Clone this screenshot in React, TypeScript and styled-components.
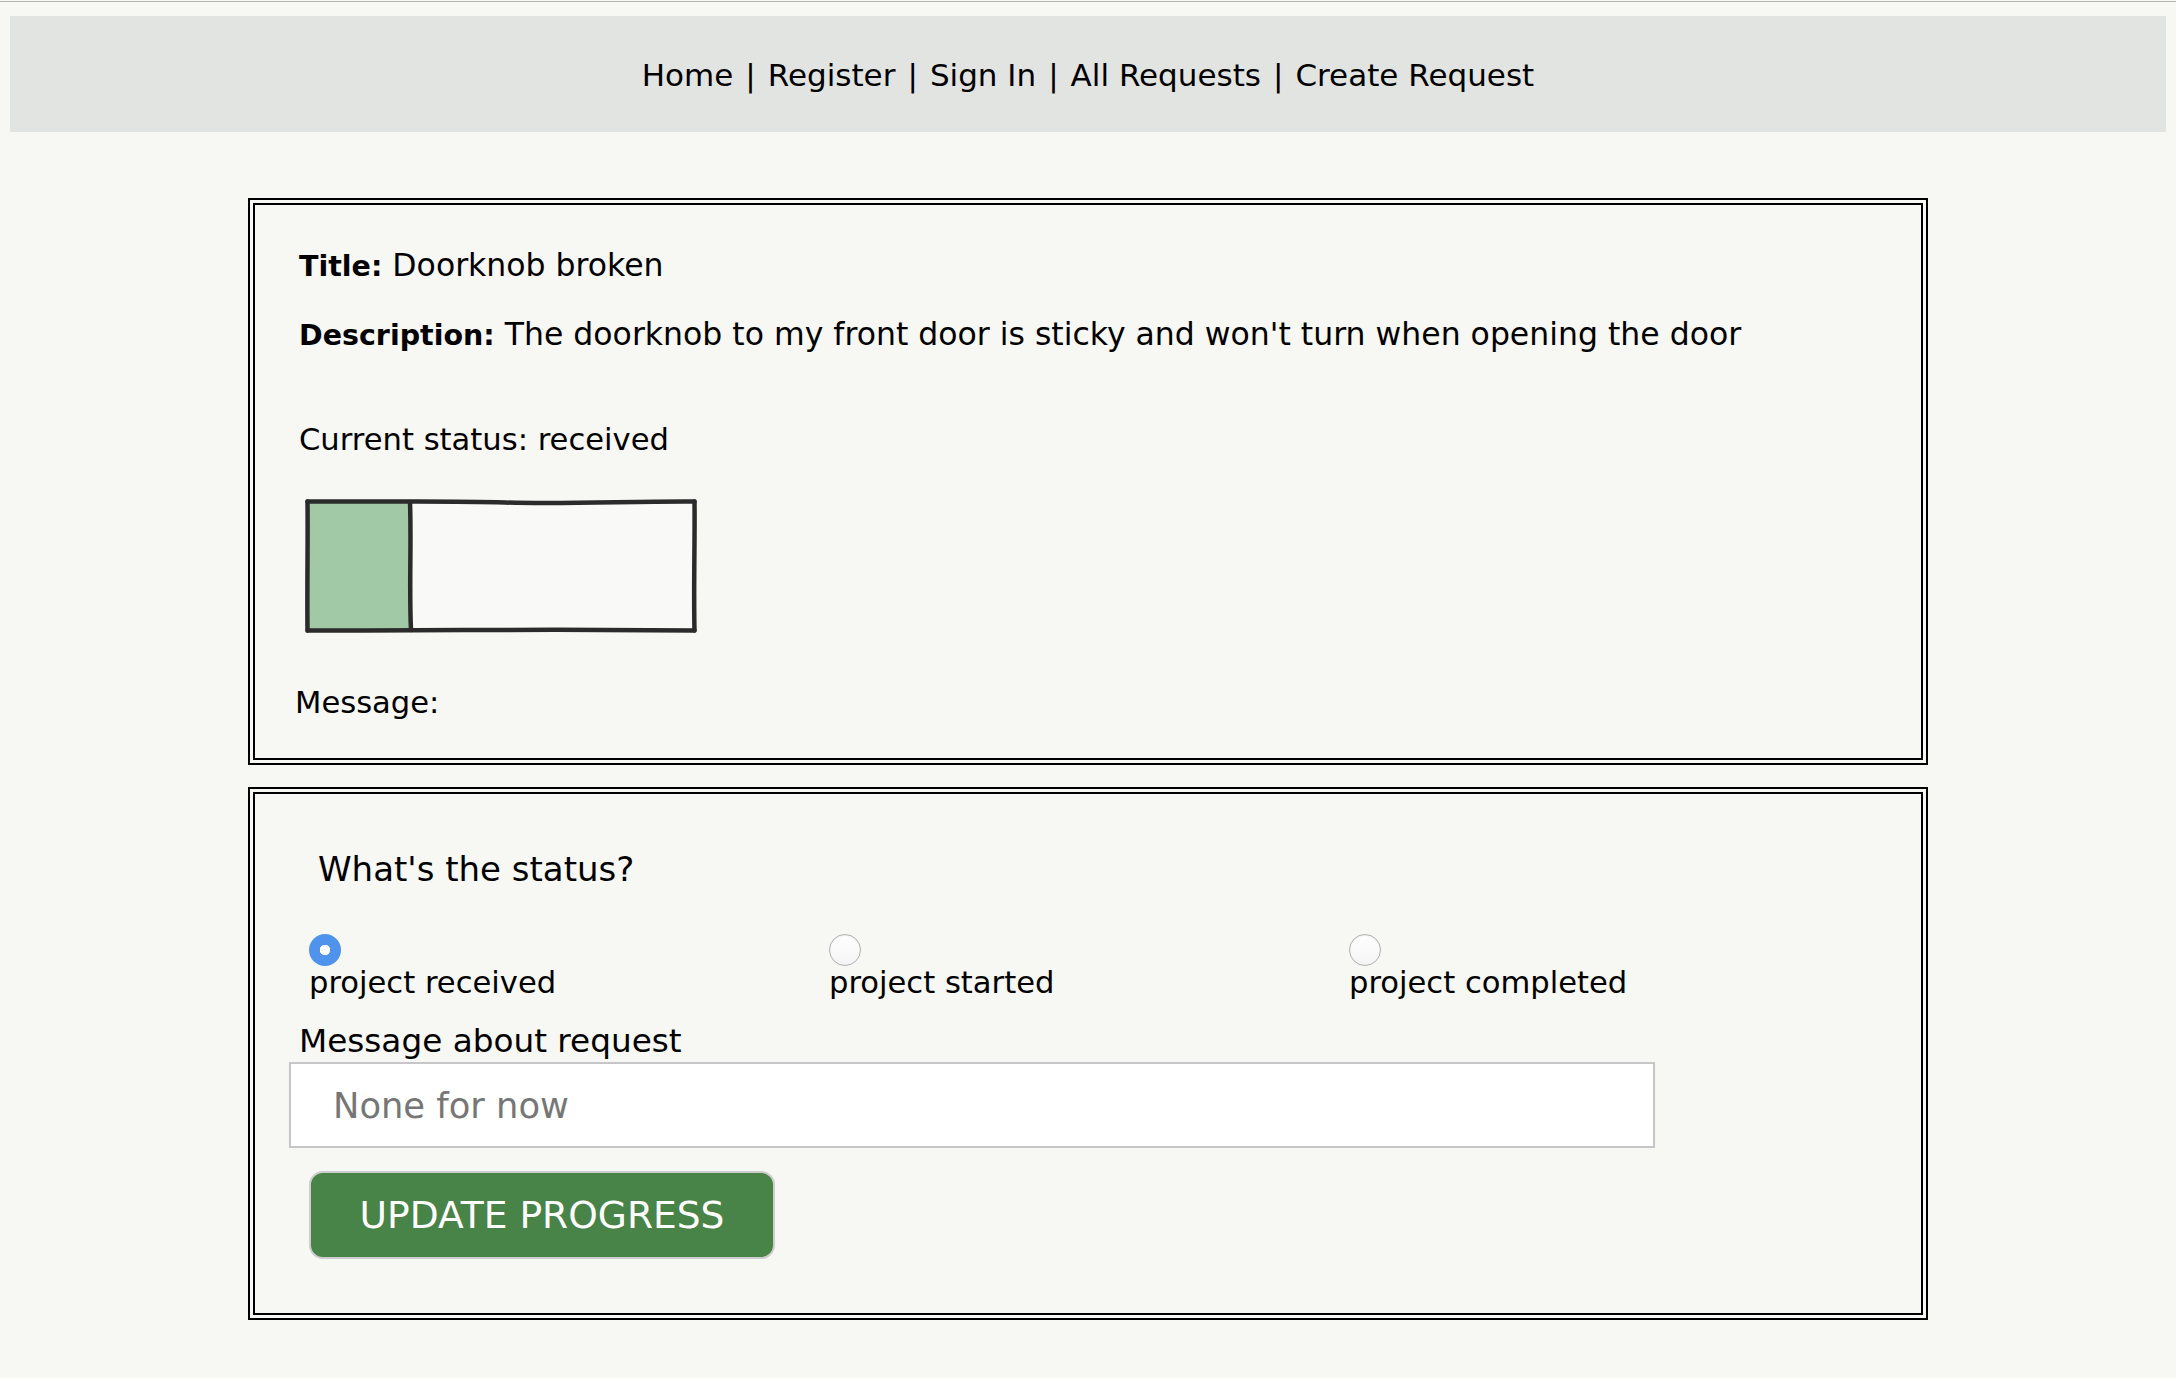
import React, { useState } from 'react';
import styled, { createGlobalStyle } from 'styled-components';

const Global = createGlobalStyle`
  html, body {
    margin: 0;
    padding: 0;
    background: #f7f7f3;
  }
  body {
    font-family: 'DejaVu Sans', 'Liberation Sans', sans-serif;
    color: #000;
  }
`;

const STATUSES = [
  { value: 'received', label: 'project received' },
  { value: 'started', label: 'project started' },
  { value: 'completed', label: 'project completed' },
];

const NAV = ['Home', 'Register', 'Sign In', 'All Requests', 'Create Request'];

const ProgressSketch = ({ step }: { step: number }) => {
  // hand drawn looking bar, the fill grows with the step
  const split = 105 + (step - 1) * 95;
  return (
    <svg width="392" height="134" viewBox="0 0 392 134">
      <rect x="4" y="4" width="384" height="126" fill="#f9f9f7" />
      <rect x="4" y="4" width={split - 4} height="126" fill="#a2c9a6" />
      <g fill="none" stroke="#2b2b2b" strokeWidth="4.5" strokeLinecap="round" strokeLinejoin="round">
        <path d="M2.5 2.5 C90 3, 140 1.5, 200 3.5 S330 2, 389.5 2.5" />
        <path d="M389.5 2.5 C390 40, 388.5 90, 389.5 131.5" />
        <path d="M389.5 131.5 C300 131, 240 130.5, 160 131 S60 131.5, 2.5 131.5" />
        <path d="M2.5 131.5 C2 90, 3 40, 2.5 2.5" />
        <path d={`M${split} 3 C${split + 1.5} 45, ${split - 1} 90, ${split + 1} 131`} />
      </g>
    </svg>
  );
};

export default function App() {
  const [status, setStatus] = useState('received');
  const step = STATUSES.findIndex((s) => s.value === status) + 1;

  return (
    <Page>
      <Global />
      <NavBar>
        {NAV.map((item, i) => (
          <React.Fragment key={item}>
            {i > 0 && <Sep>|</Sep>}
            <NavLink>{item}</NavLink>
          </React.Fragment>
        ))}
      </NavBar>

      <Main>
        <Card $padTop={42} $padBottom={37}>
          <Line $size={31.5}>
            <b>Title:</b> Doorknob broken
          </Line>
          <Line $size={31.5} $gap={33}>
            <b>Description:</b> The doorknob to my front door is sticky and won't turn when opening
            the door
          </Line>
          <Line $gap={70}>Current status: {status}</Line>
          <BarWrap>
            <ProgressSketch step={step} />
          </BarWrap>
          <Line $gap={52} $shift={-4}>
            Message:
          </Line>
        </Card>

        <Card $padTop={55} $padBottom={54}>
          <Question>What's the status?</Question>
          <RadioRow>
            {STATUSES.map((s) => (
              <RadioOption key={s.value}>
                <Radio
                  type="radio"
                  name="status"
                  value={s.value}
                  checked={status === s.value}
                  onChange={() => setStatus(s.value)}
                />
                <RadioLabel>{s.label}</RadioLabel>
              </RadioOption>
            ))}
          </RadioRow>
          <FieldLabel>Message about request</FieldLabel>
          <MessageInput placeholder="None for now" />
          <UpdateButton>UPDATE PROGRESS</UpdateButton>
        </Card>
      </Main>
    </Page>
  );
}

const Page = styled.div`
  margin-top: 1px;
  border-top: 1px solid #b4b4b4;
  padding: 14px 10px 58px;
  min-height: 1300px;
`;

const NavBar = styled.nav`
  background: #e2e4e1;
  height: 116px;
  box-sizing: border-box;
  padding-top: 39px;
  text-align: center;
  font-size: 31px;
  line-height: 40px;
`;

const NavLink = styled.a`
  color: #000;
  text-decoration: none;
  cursor: pointer;
`;

const Sep = styled.span`
  margin: 0 12px;
`;

const Main = styled.main`
  display: flex;
  flex-direction: column;
  align-items: center;
  gap: 22px;
  margin-top: 66px;
`;

const Card = styled.section<{ $padTop: number; $padBottom: number }>`
  width: 1680px;
  box-sizing: border-box;
  border: 7px double #000;
  padding: ${(p) => p.$padTop}px 44px ${(p) => p.$padBottom}px;
  display: flex;
  flex-direction: column;
  align-items: flex-start;
`;

const Line = styled.p<{ $gap?: number; $shift?: number; $size?: number }>`
  margin: ${(p) => p.$gap || 0}px 0 0 ${(p) => p.$shift || 0}px;
  font-size: ${(p) => p.$size || 30.6}px;
  line-height: 36px;

  b {
    font-weight: bold;
    font-size: 28.5px;
    line-height: 1;
  }
`;

const BarWrap = styled.div`
  margin: 41px 0 0 6px;
  line-height: 0;
`;

const Question = styled.h3`
  margin: 0 0 0 19px;
  font-size: 34px;
  font-weight: normal;
  line-height: 40px;
`;

const RadioRow = styled.div`
  display: grid;
  grid-template-columns: repeat(3, 520px);
  margin: 45px 0 0 10px;
`;

const RadioOption = styled.label`
  display: flex;
  flex-direction: column;
  align-items: flex-start;
  cursor: pointer;
`;

const Radio = styled.input`
  appearance: none;
  -webkit-appearance: none;
  width: 32px;
  height: 32px;
  margin: 0;
  border-radius: 50%;
  border: 1.5px solid #b0b0b0;
  background: linear-gradient(#ffffff, #f4f4f4);
  box-shadow: inset 0 1px 1px rgba(0, 0, 0, 0.06);
  box-sizing: border-box;

  &:checked {
    border: none;
    background: radial-gradient(circle, #ffffff 0 5px, #4f93ec 5.5px);
    box-shadow: none;
  }
`;

const RadioLabel = styled.span`
  font-size: 30.6px;
  line-height: 34px;
`;

const FieldLabel = styled.label`
  margin-top: 22px;
  font-size: 32.7px;
  line-height: 38px;
`;

const MessageInput = styled.input`
  margin: 2px 0 0 -10px;
  width: 1366px;
  height: 86px;
  box-sizing: border-box;
  border: 2px solid #c6c6c6;
  background: #fff;
  padding: 0 0 0 42px;
  font-family: 'DejaVu Sans', 'Liberation Sans', sans-serif;
  font-size: 35.3px;
  outline: none;

  &::placeholder {
    color: #767676;
  }
`;

const UpdateButton = styled.button`
  margin: 23px 0 0 10px;
  width: 466px;
  height: 88px;
  box-sizing: border-box;
  border: 2px solid #cdcdcd;
  border-radius: 14px;
  background: #488347;
  color: #fff;
  font-family: 'DejaVu Sans', 'Liberation Sans', sans-serif;
  font-size: 37.6px;
  cursor: pointer;
`;
